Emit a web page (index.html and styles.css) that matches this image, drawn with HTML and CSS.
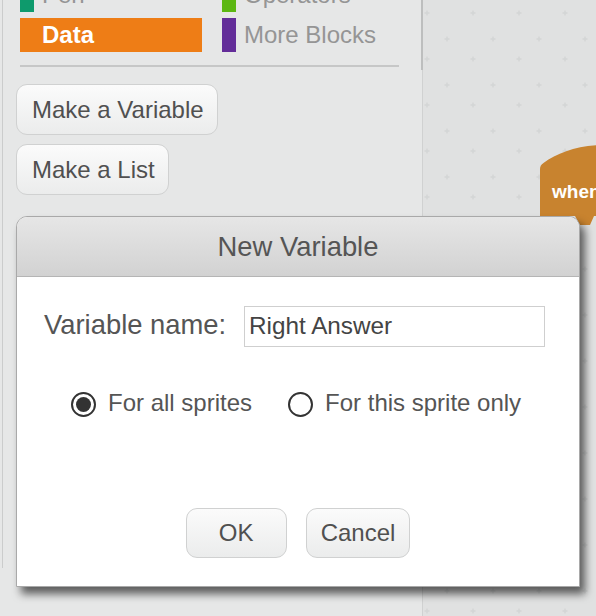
FILE: index.html
```html
<!DOCTYPE html>
<html>
<head>
<meta charset="utf-8">
<link rel="stylesheet" href="styles.css">
</head>
<body>
<div class="app">
  <aside class="palette">
    <div class="palette-frame">
      <div class="categories">
        <div class="cat"><span class="swatch pen"></span><span class="cat-label">Pen</span></div>
        <div class="cat"><span class="swatch operators"></span><span class="cat-label">Operators</span></div>
        <div class="cat selected"><span class="swatch data"></span><span class="cat-label">Data</span></div>
        <div class="cat"><span class="swatch more"></span><span class="cat-label">More Blocks</span></div>
      </div>
      <div class="sep"></div>
      <div class="pal-buttons">
        <button class="pal-btn">Make a Variable</button>
        <button class="pal-btn">Make a List</button>
      </div>
    </div>
  </aside>
  <div class="divider"><div class="thumb"></div></div>
  <main class="scripts">
    <svg class="grid" width="100%" height="100%">
      <defs>
        <pattern id="cross" width="46" height="46" patternUnits="userSpaceOnUse">
          <path d="M4 10.5v5M1.5 13h5M24 36.5v5M21.5 39h5" stroke="#d3d5d5" stroke-width="1.4" fill="none"/>
        </pattern>
      </defs>
      <rect width="100%" height="100%" fill="url(#cross)"/>
    </svg>
    <svg class="hat" width="60" height="90" viewBox="0 0 60 90">
      <path d="M0 26 Q0 22 3.5 20 C17 10 36 3 60 2 L60 73 L54 73 L50 82 L40 82 L35 73 L0 73 Z" fill="#c8832f"/>
      <text class="hat-text" x="12" y="55">when</text>
    </svg>
  </main>

  <div class="dialog">
    <div class="dialog-title">New Variable</div>
    <div class="dialog-body">
      <div class="name-row">
        <span class="name-label">Variable name:</span>
        <input class="name-input" type="text" value="Right Answer">
      </div>
      <div class="radio-row">
        <div class="radio-opt">
          <span class="radio checked"></span>
          <span class="radio-label">For all sprites</span>
        </div>
        <div class="radio-opt second">
          <span class="radio"></span>
          <span class="radio-label">For this sprite only</span>
        </div>
      </div>
      <div class="btn-row">
        <button class="dlg-btn">OK</button>
        <button class="dlg-btn">Cancel</button>
      </div>
    </div>
  </div>
</div>
</body>
</html>
```

FILE: styles.css
```css
* { box-sizing: border-box; }
html, body {
  margin: 0;
  padding: 0;
  width: 596px;
  height: 616px;
  overflow: hidden;
  font-family: "Liberation Sans", Arial, sans-serif;
  background: #e6e7e7;
}
.app {
  position: relative;
  display: flex;
  width: 596px;
  height: 616px;
}
.palette {
  width: 421px;
  flex: none;
  background: #e6e7e7;
  overflow: hidden;
}
.palette-frame {
  margin-left: 2px;
  height: 590px;
  border-left: 1px solid #cbcccc;
  padding-left: 17px;
}
.categories {
  display: grid;
  grid-template-columns: 182px 182px;
  grid-auto-rows: 34px;
  column-gap: 20px;
  row-gap: 6px;
  margin-top: -22px;
}
.cat {
  display: flex;
  align-items: center;
  font-size: 24px;
  color: #959595;
}
.swatch {
  width: 14px;
  height: 34px;
  flex: none;
  margin-right: 8px;
}
.swatch.pen { background: #0e9a6c; }
.swatch.operators { background: #5cb712; }
.swatch.data { background: #ee7d16; }
.swatch.more { background: #632d99; }
.cat.selected {
  background: #ee7d16;
  color: #fff;
  font-weight: bold;
}
.sep {
  margin-top: 13px;
  width: 379px;
  height: 2px;
  background: #c6c7c7;
}
.pal-buttons {
  margin-top: 17px;
  margin-left: -4px;
  display: flex;
  flex-direction: column;
  align-items: flex-start;
  gap: 9px;
}
.pal-btn, .dlg-btn {
  font-family: "Liberation Sans", Arial, sans-serif;
  font-size: 24px;
  color: #505050;
  height: 51px;
  padding: 0 13px 0 15px;
  border: 1px solid #d0d1d1;
  border-radius: 11px;
  background: linear-gradient(#fbfbfb, #ebecec);
  cursor: default;
}
.divider {
  width: 2px;
  flex: none;
  background: linear-gradient(to right, #e6e7e7 50%, #d0d1d1 50%);
}
.thumb {
  width: 2px;
  height: 70px;
  background: #bdbebe;
}
.scripts {
  position: relative;
  flex: 1;
  background: #e0e1e1;
  overflow: hidden;
}
.grid {
  position: absolute;
  left: 0;
  top: 0;
}
.hat {
  position: absolute;
  left: 117px;
  top: 143px;
}
.hat-text {
  font-family: "Liberation Sans", Arial, sans-serif;
  font-weight: bold;
  font-size: 19px;
  fill: #ffffff;
}
.dialog {
  position: absolute;
  left: 16px;
  top: 216px;
  width: 564px;
  height: 371px;
  border: 1px solid #a9a9a9;
  border-radius: 11px 11px 0 0;
  background: #fff;
  box-shadow: 5px 7px 9px rgba(0, 0, 0, 0.6);
  display: flex;
  flex-direction: column;
}
.dialog-title {
  height: 60px;
  flex: none;
  border-bottom: 1px solid #b5b5b5;
  border-radius: 10px 10px 0 0;
  background: linear-gradient(#e6e6e6, #d2d2d2);
  display: flex;
  align-items: center;
  justify-content: center;
  font-size: 27.4px;
  color: #555;
}
.dialog-body {
  flex: 1;
  display: flex;
  flex-direction: column;
  padding: 29px 0 28px;
}
.name-row {
  display: flex;
  align-items: center;
  padding-left: 27px;
}
.name-label {
  width: 200px;
  flex: none;
  font-size: 27.4px;
  color: #555;
  margin-top: -4px;
}
.name-input {
  width: 301px;
  height: 41px;
  border: 1px solid #cfcfcf;
  padding: 0 4px 2px;
  font-family: "Liberation Sans", Arial, sans-serif;
  font-size: 24.3px;
  color: #444;
  outline: none;
  background: #fff;
}
.radio-row {
  display: flex;
  align-items: center;
  margin-top: 45px;
  padding-left: 54px;
}
.radio-opt {
  display: flex;
  align-items: center;
}
.radio-opt.second { margin-left: 36px; }
.radio {
  width: 25px;
  height: 25px;
  border-radius: 50%;
  border: 2px solid #333;
  background: #fff;
  display: flex;
  align-items: center;
  justify-content: center;
  flex: none;
}
.radio.checked::after {
  content: "";
  width: 15px;
  height: 15px;
  border-radius: 50%;
  background: #333;
}
.radio-label {
  margin-left: 12px;
  font-size: 24px;
  color: #555;
  margin-top: -3px;
}
.btn-row {
  margin-top: auto;
  display: flex;
  justify-content: center;
  gap: 19px;
}
.dlg-btn {
  height: 50px;
  min-width: 101px;
  padding: 0 14px;
}
```
